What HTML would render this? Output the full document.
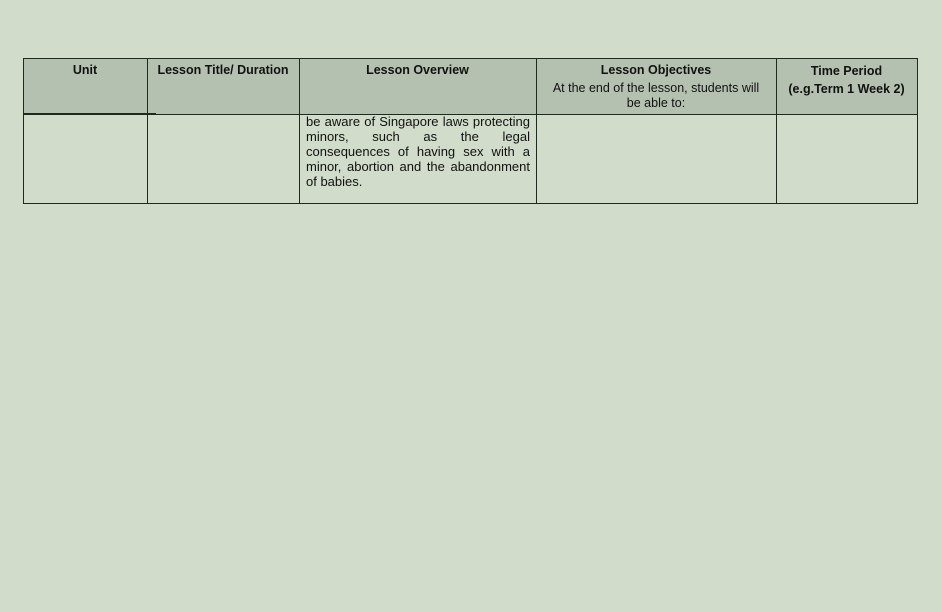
<!DOCTYPE html>
<html><head><meta charset="utf-8"><style>
body{margin:0;width:942px;height:612px;background:#d1dccb;position:relative;font-family:"Liberation Sans",Arial,sans-serif;color:#111;overflow:hidden}
.h{position:absolute;left:23px;top:58px;width:895px;height:56px;background:#b5c1b0}
.l{position:absolute;background:#1e2a1e}
.t{position:absolute;font-size:12.5px;text-align:center;line-height:16px}
b{font-weight:bold}
.o{position:absolute;left:306px;top:114px;width:224px;font-size:13px;line-height:15px}
.o div{text-align:justify;text-align-last:justify;white-space:nowrap}
.o div.e{text-align-last:left}
</style></head><body>
<div class="h"></div>
<div class="l" style="left:23px;top:58px;width:895px;height:1px"></div>
<div class="l" style="left:23px;top:114px;width:895px;height:1px"></div>
<div class="l" style="left:23px;top:113px;width:133px;height:1px"></div>
<div class="l" style="left:23px;top:203px;width:895px;height:1px"></div>
<div class="l" style="left:23px;top:58px;width:1px;height:146px"></div>
<div class="l" style="left:147px;top:58px;width:1px;height:146px"></div>
<div class="l" style="left:299px;top:58px;width:1px;height:146px"></div>
<div class="l" style="left:536px;top:58px;width:1px;height:146px"></div>
<div class="l" style="left:776px;top:58px;width:1px;height:146px"></div>
<div class="l" style="left:917px;top:58px;width:1px;height:146px"></div>
<div class="t" style="left:23px;width:124px;top:62px"><b>Unit</b></div>
<div class="t" style="left:147px;width:152px;top:62px"><b>Lesson Title/ Duration</b></div>
<div class="t" style="left:299px;width:237px;top:62px"><b>Lesson Overview</b></div>
<div class="t" style="left:536px;width:240px;top:62px;line-height:16px"><b>Lesson Objectives</b><br><span style="display:block;margin-top:3px;line-height:15px">At the end of the lesson, students will<br>be able to:</span></div>
<div class="t" style="left:776px;width:141px;top:62px;line-height:18px"><b>Time Period<br>(e.g.Term 1 Week 2)</b></div>
<div class="o">
<div>be aware of Singapore laws protecting</div>
<div>minors, such as the legal</div>
<div>consequences of having sex with a</div>
<div>minor, abortion and the abandonment</div>
<div class="e">of babies.</div>
</div>
</body></html>
